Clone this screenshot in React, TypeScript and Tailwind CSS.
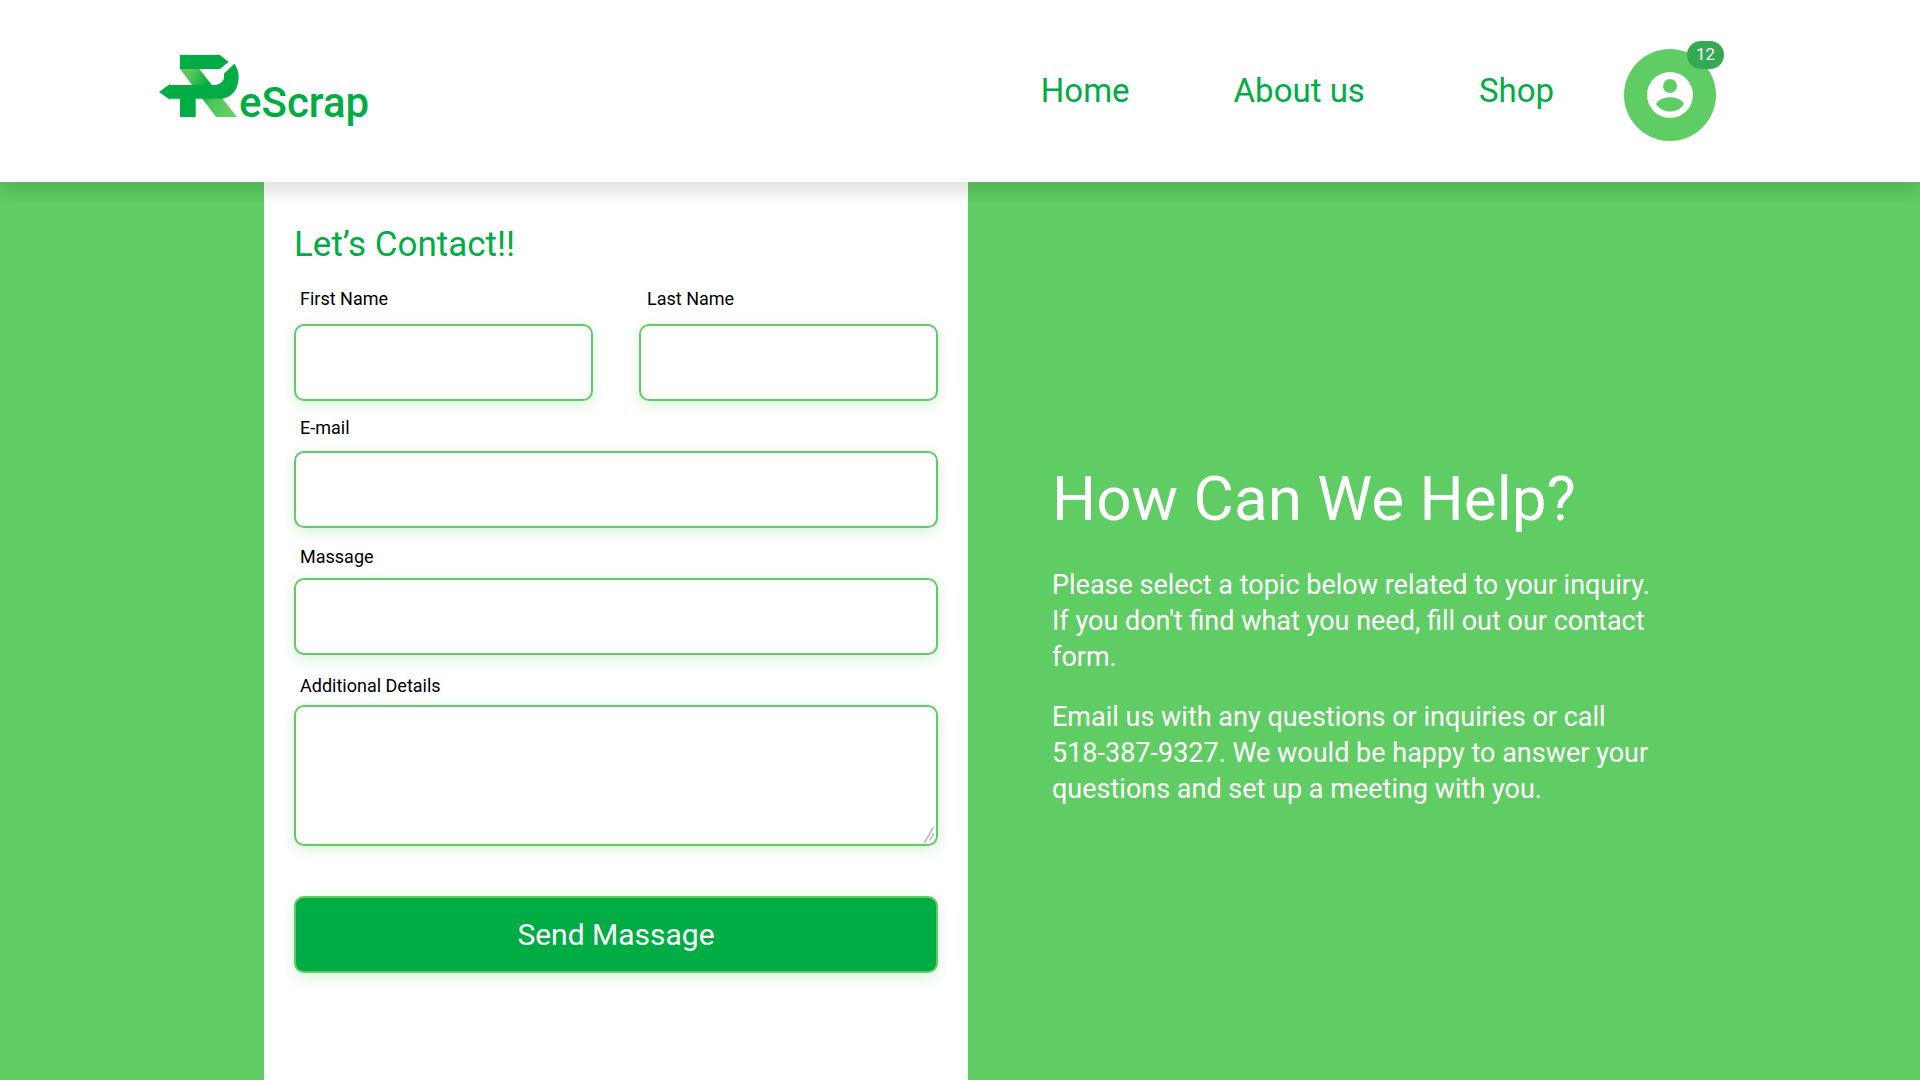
import React from "react";

const inputClass =
  "block w-full rounded-[10px] border-2 border-[#5fcd64] bg-white px-4 text-lg text-black shadow-[0_4px_14px_rgba(95,205,100,0.25)] outline-none";

type FieldProps = { id: string; label: string; type?: string; labelClass?: string };

function Field({ id, label, type = "text", labelClass = "pl-1.5" }: FieldProps) {
  return (
    <div className="flex flex-col">
      <label htmlFor={id} className={`flex h-[50px] items-center text-lg text-black ${labelClass}`}>
        {label}
      </label>
      <input id={id} type={type} className={`${inputClass} h-[77px]`} />
    </div>
  );
}

function Logo() {
  return (
    <a href="#" aria-label="ReScrap" className="flex items-baseline pt-2 text-[#00ad45]">
      <svg viewBox="0 0 240 189" className="h-[63px] w-20" fill="currentColor">
        <defs>
          <linearGradient id="leg" gradientUnits="userSpaceOnUse" x1="75" y1="90" x2="215" y2="160">
            <stop offset="0" stopColor="#5fc75c" />
            <stop offset="0.4" stopColor="#00ad45" />
            <stop offset="0.6" stopColor="#4cc257" />
            <stop offset="1" stopColor="#66cd66" />
          </linearGradient>
        </defs>
        <path d="M63 45H121L234 189H171Z" fill="url(#leg)" />
        <path d="M63 3H179V0L209 24L179 47V45H63Z" />
        <path d="M0 114L33 90V93H168C185 92 195 80 195 70V59L226 29Q239 48 239 68C239 105 218 134 183 134H110V189H63V134H33V137Z" />
      </svg>
      <span className="text-[42px] leading-[66px] font-medium">eScrap</span>
    </a>
  );
}

export default function App() {
  return (
    <div className="flex min-h-screen flex-col bg-[#5fcd64] font-['Roboto','Liberation_Sans',sans-serif]">
      <header className="relative z-10 flex h-[182px] items-center justify-between bg-white pr-[204px] pl-[159px] shadow-[0_12px_14px_rgba(0,0,0,0.11)]">
        <Logo />
        <nav className="flex items-center text-[33px] text-[#00ad45]">
          <a href="#" className="mr-[104px]">Home</a>
          <a href="#" className="mr-[114px]">About us</a>
          <a href="#" className="mr-[70px]">Shop</a>
          <button type="button" aria-label="Account" className="relative mt-2 flex size-[92px] items-center justify-center rounded-full bg-[#5fcd64]">
            <svg viewBox="0 0 46 46" className="size-[46px]">
              <circle cx="23" cy="23" r="23" fill="#fff" />
              <circle cx="23" cy="14" r="7" fill="#5fcd64" />
              <path d="M9 32C13 23 33 23 37 32C31 42 15 42 9 32Z" fill="#5fcd64" />
            </svg>
            <span className="absolute -top-2 -right-2 flex h-7 w-[37px] items-center justify-center rounded-full bg-[#34a853] text-[17px] text-white">
              12
            </span>
          </button>
        </nav>
      </header>

      <main className="flex grow">
        <form className="ml-[264px] w-[704px] bg-white px-[30px] pt-[39px]" onSubmit={(e) => e.preventDefault()}>
          <h1 className="text-[35px] leading-[48px] text-[#00ad45]">Let’s Contact!!</h1>
          <div className="mt-[5px] grid grid-cols-2 gap-[46px]">
            <Field id="first-name" label="First Name" />
            <Field id="last-name" label="Last Name" labelClass="pl-2" />
          </div>
          <Field id="email" label="E-mail" type="email" labelClass="pl-1.5 pt-1" />
          <Field id="message" label="Massage" labelClass="pl-1.5 pt-2" />
          <div className="flex flex-col">
            <label htmlFor="details" className="flex h-[50px] items-center pt-3 pl-1.5 text-lg text-black">
              Additional Details
            </label>
            <div className="relative">
              <textarea id="details" className={`${inputClass} h-[141px] resize-none`} />
              <svg viewBox="0 0 12 18" className="pointer-events-none absolute right-[3px] bottom-0.5 h-[18px] w-3" stroke="#bdbdbd" strokeWidth="1.6" strokeLinecap="round">
                <path d="M1.5 16.5L10 2M7 14L10.5 8" fill="none" />
              </svg>
            </div>
          </div>
          <button
            type="submit"
            className="mt-[50px] h-[77px] w-full rounded-[10px] border-2 border-[#5fcd64] bg-[#00ad45] text-[30px] text-white shadow-[0_4px_14px_rgba(95,205,100,0.25)]"
          >
            Send Massage
          </button>
        </form>

        <section className="ml-[84px] flex w-[612px] flex-col justify-center pt-1 text-white">
          <h2 className="text-[62px] leading-[80px]">How Can We Help?</h2>
          <p className="mt-7 text-[27px] leading-9">
            Please select a topic below related to your inquiry.
            <br />
            If you don't find what you need, fill out our contact form.
          </p>
          <p className="mt-6 text-[27px] leading-9">
            Email us with any questions or inquiries or call
            <br />
            518-387-9327. We would be happy to answer your questions and set up a meeting with you.
          </p>
        </section>
      </main>
    </div>
  );
}
